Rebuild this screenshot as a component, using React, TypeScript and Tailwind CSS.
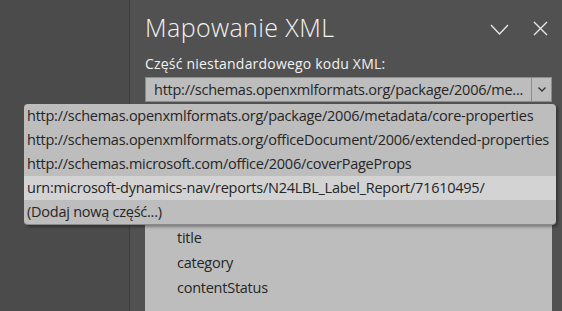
const parts = [
  "http://schemas.openxmlformats.org/package/2006/metadata/core-properties",
  "http://schemas.openxmlformats.org/officeDocument/2006/extended-properties",
  "http://schemas.microsoft.com/office/2006/coverPageProps",
  "urn:microsoft-dynamics-nav/reports/N24LBL_Label_Report/71610495/",
  "(Dodaj nową część...)",
];

const treeItems = ["title", "category", "contentStatus"];

export default function App() {
  return (
    <div
      className="relative w-[562px] h-[311px] overflow-hidden flex bg-[#4b4b4b]"
      style={{ fontFamily: '"Open Sans", "Noto Sans", sans-serif' }}
    >
      {/* Left document area */}
      <div className="w-[130px] shrink-0 bg-[#4b4b4b] border-r border-[#3e3e3e]" />

      {/* XML mapping pane */}
      <div className="flex-1 min-w-0 bg-[#515151] pl-[15px] pr-[10px] flex flex-col">
        <div className="flex items-center h-[52px] pt-[2px]">
          <h1 className="flex-1 text-[25px] font-light text-[#f2f2f2] leading-none tracking-[0.4px]">
            Mapowanie XML
          </h1>
          <svg width="19" height="11" viewBox="0 0 19 11" className="mr-[24px] mt-[4px]" fill="none" stroke="#e6e6e6" strokeWidth={1.4}>
            <path d="M1 1l8.5 9L18 1" />
          </svg>
          <svg width="15" height="15" viewBox="0 0 15 15" className="mr-[4px] mt-[2px]" fill="none" stroke="#e6e6e6" strokeWidth={1.4}>
            <path d="M1 1l13 13M14 1L1 14" />
          </svg>
        </div>

        <p className="text-[14px] text-[#f2f2f2] leading-none mt-[5px] tracking-[0.2px]">
          Część niestandardowego kodu XML:
        </p>

        <div className="mt-[6px] h-[25px] flex bg-[#bdbdbd] border border-[#8c8c8c]">
          <div className="flex-1 min-w-0 px-[8px] flex items-center text-[14.5px] text-[#262626] whitespace-nowrap overflow-hidden tracking-[-0.25px]">
            http://schemas.openxmlformats.org/package/2006/me...
          </div>
          <div className="w-[20px] border-l border-[#8c8c8c] flex items-center justify-center">
            <svg width="8" height="5" viewBox="0 0 8 5" fill="none" stroke="#333" strokeWidth={1.3}>
              <path d="M0.5 0.5l3.5 3.5 3.5-3.5" />
            </svg>
          </div>
        </div>

        {/* Tree of nodes */}
        <div className="mt-[123px] flex-1 bg-[#bdbdbd] pl-[32px]">
          {treeItems.map((t) => (
            <div key={t} className="h-[25px] flex items-center text-[14.5px] text-[#262626] tracking-[-0.25px]">
              {t}
            </div>
          ))}
        </div>
      </div>

      {/* Open dropdown list */}
      <div className="absolute left-[24px] top-[104px] w-[532px] bg-[#bdbdbd] rounded-[4px] overflow-hidden shadow-[2px_2px_3px_rgba(0,0,0,0.35)] border-b border-[#8a8a8a]">
        {parts.map((p, i) => (
          <div
            key={p}
            className={
              "h-[24px] px-[3px] flex items-center text-[14.5px] text-[#262626] whitespace-nowrap tracking-[-0.25px] " +
              (i === 3 ? "bg-[#d3d3d3]" : "")
            }
          >
            {p}
          </div>
        ))}
      </div>
    </div>
  );
}
